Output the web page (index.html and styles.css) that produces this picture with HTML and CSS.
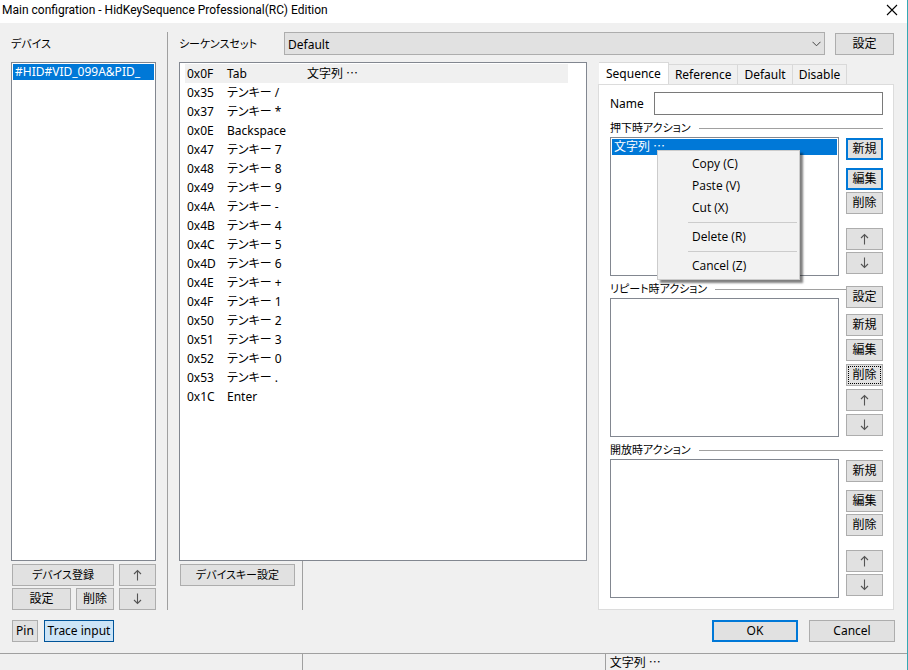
FILE: index.html
```html
<!DOCTYPE html>
<html lang="ja">
<head>
<meta charset="utf-8">
<title>Main configration - HidKeySequence Professional(RC) Edition</title>
<link rel="stylesheet" href="styles.css">
</head>
<body>
<header class="titlebar">
  <h1>Main configration - HidKeySequence Professional(RC) Edition</h1>
  <button class="close" aria-label="Close"><svg width="12" height="12" viewBox="0 0 12 12"><path d="M1 1l10 10M11 1L1 11" stroke="#000" stroke-width="1.1" fill="none"/></svg></button>
</header>

<main class="content">
  <section class="devices">
    <h2 class="heading">デバイス</h2>
    <ul class="listbox" role="listbox" aria-label="デバイス">
      <li class="selected" role="option" aria-selected="true">#HID#VID_099A&amp;PID_</li>
    </ul>
    <div class="device-buttons">
      <button class="wide kana">デバイス登録</button>
      <button class="arrow" aria-label="Up"><svg width="9" height="12" viewBox="0 0 9 12"><path d="M4.500 11.500V1.500M1 5l3.500-3.500L8 5"/></svg></button>
      <button>設定</button>
      <button>削除</button>
      <button class="arrow" aria-label="Down"><svg width="9" height="12" viewBox="0 0 9 12"><path d="M4.500 .5v10M1 7l3.500 3.500L8 7"/></svg></button>
    </div>
  </section>

  <section class="editor">
    <div class="set-row">
      <label class="kana" for="set">シーケンスセット</label>
      <div class="combo">
        <select id="set"><option>Default</option></select>
        <svg width="9" height="6" viewBox="0 0 9 6"><path d="M.5 .8l4 4 4-4" stroke="#444" fill="none"/></svg>
      </div>
      <button class="set-config">設定</button>
    </div>

    <div class="keys">
      <div class="key-list">
        <table>
          <tbody>
            <tr class="current"><td>0x0F</td><td>Tab</td><td>文字列 ⋯</td></tr>
            <tr><td>0x35</td><td>テンキー /</td><td></td></tr>
            <tr><td>0x37</td><td>テンキー *</td><td></td></tr>
            <tr><td>0x0E</td><td>Backspace</td><td></td></tr>
            <tr><td>0x47</td><td>テンキー 7</td><td></td></tr>
            <tr><td>0x48</td><td>テンキー 8</td><td></td></tr>
            <tr><td>0x49</td><td>テンキー 9</td><td></td></tr>
            <tr><td>0x4A</td><td>テンキー -</td><td></td></tr>
            <tr><td>0x4B</td><td>テンキー 4</td><td></td></tr>
            <tr><td>0x4C</td><td>テンキー 5</td><td></td></tr>
            <tr><td>0x4D</td><td>テンキー 6</td><td></td></tr>
            <tr><td>0x4E</td><td>テンキー +</td><td></td></tr>
            <tr><td>0x4F</td><td>テンキー 1</td><td></td></tr>
            <tr><td>0x50</td><td>テンキー 2</td><td></td></tr>
            <tr><td>0x51</td><td>テンキー 3</td><td></td></tr>
            <tr><td>0x52</td><td>テンキー 0</td><td></td></tr>
            <tr><td>0x53</td><td>テンキー .</td><td></td></tr>
            <tr><td>0x1C</td><td>Enter</td><td></td></tr>
          </tbody>
        </table>
      </div>
      <div class="key-tools">
        <button class="kana">デバイスキー設定</button>
      </div>
    </div>

    <div class="detail">
      <div class="tabs" role="tablist">
        <button class="tab active" role="tab" aria-selected="true">Sequence</button>
        <button class="tab" role="tab">Reference</button>
        <button class="tab" role="tab">Default</button>
        <button class="tab" role="tab">Disable</button>
      </div>
      <div class="panel" role="tabpanel">
        <div class="name-row">
          <label for="name">Name</label>
          <input id="name" type="text">
        </div>

        <section class="group">
          <h3 class="kana">押下時アクション</h3>
          <div class="list-wrap">
            <ul class="listbox" role="listbox" aria-label="押下時アクション">
              <li class="selected" role="option" aria-selected="true">文字列 ⋯</li>
            </ul>
            <div class="menu" role="menu">
              <button role="menuitem">Copy (C)</button>
              <button role="menuitem">Paste (V)</button>
              <button role="menuitem">Cut (X)</button>
              <hr>
              <button role="menuitem">Delete (R)</button>
              <hr>
              <button role="menuitem">Cancel (Z)</button>
            </div>
          </div>
          <div class="actions">
            <button class="primary lead">新規</button>
            <button class="primary">編集</button>
            <button class="tail">削除</button>
            <button class="arrow" aria-label="Up"><svg width="9" height="12" viewBox="0 0 9 12"><path d="M4.500 11.500V1.500M1 5l3.500-3.500L8 5"/></svg></button>
            <button class="arrow" aria-label="Down"><svg width="9" height="12" viewBox="0 0 9 12"><path d="M4.500 .5v10M1 7l3.500 3.500L8 7"/></svg></button>
          </div>
        </section>

        <section class="group with-config">
          <h3 class="kana">リピート時アクション</h3>
          <div class="list-wrap"><ul class="listbox" role="listbox" aria-label="リピート時アクション"></ul></div>
          <div class="actions">
            <button class="lead">設定</button>
            <button>新規</button>
            <button>編集</button>
            <button class="focused">削除</button>
            <button class="arrow" aria-label="Up"><svg width="9" height="12" viewBox="0 0 9 12"><path d="M4.500 11.500V1.500M1 5l3.500-3.500L8 5"/></svg></button>
            <button class="arrow" aria-label="Down"><svg width="9" height="12" viewBox="0 0 9 12"><path d="M4.500 .5v10M1 7l3.500 3.500L8 7"/></svg></button>
          </div>
        </section>

        <section class="group">
          <h3 class="kana">開放時アクション</h3>
          <div class="list-wrap"><ul class="listbox" role="listbox" aria-label="開放時アクション"></ul></div>
          <div class="actions">
            <button class="lead">新規</button>
            <button>編集</button>
            <button class="tail">削除</button>
            <button class="arrow" aria-label="Up"><svg width="9" height="12" viewBox="0 0 9 12"><path d="M4.500 11.500V1.500M1 5l3.500-3.500L8 5"/></svg></button>
            <button class="arrow" aria-label="Down"><svg width="9" height="12" viewBox="0 0 9 12"><path d="M4.500 .5v10M1 7l3.500 3.500L8 7"/></svg></button>
          </div>
        </section>
      </div>
    </div>
  </section>
</main>

<div class="dialog-row">
  <button class="pin">Pin</button>
  <button class="trace" aria-pressed="true">Trace input</button>
  <button class="primary ok">OK</button>
  <button class="cancel">Cancel</button>
</div>

<footer class="status">
  <span></span><span></span><span>文字列 ⋯</span>
</footer>
</body>
</html>
```

FILE: styles.css
```css
* { box-sizing: border-box; }

body {
  margin: 0;
  min-height: 100vh;
  display: flex;
  flex-direction: column;
  background: #f0f0f0;
  border-right: 1px solid #35a9b5;
  color: #000;
  font: 12px/18px "Noto Sans", "Noto Sans CJK JP", sans-serif;
  font-feature-settings: "palt";
}

h1, h2, h3 { margin: 0; font: inherit; }

button, input, select { font: inherit; color: inherit; font-feature-settings: inherit; }

button {
  height: 22px;
  padding: 0;
  border: 1px solid #adadad;
  background: #e1e1e1;
  line-height: 18px;
  white-space: nowrap;
}

button.primary { border: 2px solid #0078d7; line-height: 16px; }

.kana { font-size: 11px; }

.arrow { display: flex; align-items: center; justify-content: center; }
.arrow path { fill: none; stroke: #555; stroke-width: 1.1; }

.titlebar {
  display: flex;
  justify-content: space-between;
  align-items: center;
  height: 23px;
  padding: 0 9px 3px 2px;
  background: #fff;
}
.titlebar h1 { font-family: Roboto, sans-serif; }
.close { display: flex; align-items: center; height: 20px; border: 0; background: none; }

.content {
  flex: 1;
  display: flex;
  padding: 9px 13px 0 11px;
}

.devices {
  display: flex;
  flex-direction: column;
  width: 157px;
  padding-right: 11px;
  border-right: 1px solid #a0a0a0;
}
.heading { height: 30px; font-size: 11px; line-height: 24px; }

.listbox {
  flex: 1;
  margin: 0;
  padding: 1px;
  list-style: none;
  background: #fff;
  border: 1px solid #828790;
}
.listbox li { height: 16px; padding: 0 2px; line-height: 16px; overflow: hidden; white-space: nowrap; }
.selected { background: #0078d7; color: #fff; }

.device-buttons {
  display: grid;
  grid-template-columns: 59px 38px 37px;
  gap: 2px 5px;
  padding: 3px 0 0 1px;
}
.wide { grid-column: span 2; }

.editor {
  flex: 1;
  display: grid;
  grid-template-columns: 1fr 296px;
  grid-template-rows: 30px 1fr;
  column-gap: 11px;
  padding-left: 11px;
}

.set-row { grid-column: 1 / -1; display: flex; align-items: flex-start; line-height: 24px; }
.set-row label { width: 105px; }
.combo { position: relative; flex: 1; display: flex; }
.combo select {
  flex: 1;
  height: 23px;
  padding: 0 3px;
  appearance: none;
  border: 1px solid #adadad;
  border-radius: 0;
  background: #e1e1e1;
}
.combo svg { position: absolute; right: 4px; top: 9px; }
.set-config { width: 59px; margin: 1px 0 0 10px; }

.keys { display: flex; flex-direction: column; }
.key-list {
  flex: 1;
  padding: 1px 18px 0 5px;
  background: #fff;
  border: 1px solid #828790;
}
table { width: 100%; border-collapse: collapse; table-layout: fixed; }
td { height: 19px; padding: 0 2px; line-height: 19px; }
td:nth-child(1) { width: 40px; }
td:nth-child(2) { width: 80px; }
.current { background: #f0f0f0; }

.key-tools {
  width: 124px;
  height: 49px;
  padding: 3px 0 0 1px;
  border-right: 1px solid #a0a0a0;
}
.key-tools button { width: 115px; }

.detail { display: flex; flex-direction: column; }
.tabs { display: flex; align-items: flex-end; height: 22px; padding-left: 1px; }
.tab {
  height: 20px;
  padding: 0 5px;
  border: 1px solid #d9d9d9;
  border-width: 1px 1px 0 0;
  background: #f0f0f0;
}
.tab + .tab { padding: 0 6px; }
.tab.active { height: 23px; margin-bottom: -1px; padding: 0 7px; background: #fff; }

.panel {
  flex: 1;
  padding: 7px 10px 9px 11px;
  background: #fff;
  border: 1px solid #dcdcdc;
}
.name-row { display: flex; align-items: center; height: 23px; margin-bottom: 2px; }
.name-row label { width: 44px; }
.name-row input { flex: 1; min-width: 0; height: 23px; padding: 0 4px; border: 1px solid #7a7a7a; background: #fff; }

.group {
  display: grid;
  grid-template-columns: 1fr 37px;
  grid-template-rows: 20px 139px;
  column-gap: 7px;
  margin-bottom: 2px;
}
.group:last-child { margin-bottom: 0; }
.group h3 { grid-column: 1 / -1; display: flex; align-items: center; gap: 8px; height: 20px; padding-top: 2px; line-height: 18px; }
.group h3::after { content: ""; flex: 1; height: 1px; background: #a0a0a0; }
.list-wrap { position: relative; display: flex; }

.actions { display: flex; flex-direction: column; gap: 2px; padding-top: 1px; }
.lead { margin-bottom: 6px; }
.tail { margin-bottom: 12px; }
.focused { outline: 1px dotted #000; outline-offset: -3px; }

.with-config h3 { grid-column: 1; margin-right: -7px; }
.with-config .list-wrap { grid-column: 1; }
.with-config .actions { grid-area: 1 / 2 / 3 / 3; gap: 3px; padding-top: 8px; }
.with-config .lead { margin-bottom: 3px; }

.menu {
  position: absolute;
  left: 47px;
  top: 13px;
  z-index: 1;
  width: 143px;
  padding: 2px;
  display: flex;
  flex-direction: column;
  border: 1px solid #ccc;
  background: #f2f2f2;
  box-shadow: 3px 3px 2px rgba(0, 0, 0, .5);
  font-family: "Open Sans", sans-serif;
}
.menu button { padding-left: 32px; border: 0; background: none; text-align: left; }
.menu hr { width: 109px; height: 1px; margin: 3px 0 3px 28px; border: 0; background: #ccc; }

.dialog-row { display: flex; padding: 10px 12px 11px 12px; }
.pin { width: 26px; margin-right: 6px; }
.trace { width: 70px; border-color: #005499; background: #cce4f7; }
.ok { width: 86px; margin-left: auto; margin-right: 11px; }
.cancel { width: 86px; }

.status {
  display: grid;
  grid-template-columns: 1fr 1fr 1fr;
  height: 17px;
  border-top: 1px solid #a0a0a0;
  line-height: 18px;
}
.status span { padding-left: 4px; }
.status span + span { border-left: 1px solid #a0a0a0; }
```
